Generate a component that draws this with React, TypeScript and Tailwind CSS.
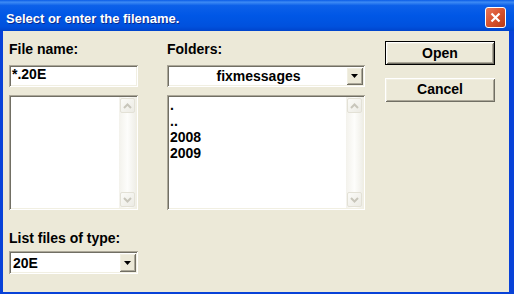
import { FC, ReactNode } from "react";

const sunken =
  "shadow-[inset_1px_1px_0_#aca899,inset_-1px_-1px_0_#ffffff,inset_2px_2px_0_#716f64,inset_-2px_-2px_0_#f1efe2]";
const raised =
  "shadow-[inset_1px_1px_0_#ffffff,inset_-1px_-1px_0_#716f64,inset_2px_2px_0_#f1efe2,inset_-2px_-2px_0_#aca899]";

const Label: FC<{ children: ReactNode }> = ({ children }) => (
  <div className="h-[16px] text-[14px] leading-[16px] font-bold text-black whitespace-nowrap">
    {children}
  </div>
);

const Chevron: FC<{ up?: boolean }> = ({ up }) => (
  <svg width="9" height="6" viewBox="0 0 9 6" className={up ? "" : "rotate-180"}>
    <path d="M1 5 L4.5 1.5 L8 5" fill="none" stroke="#c8c6bb" strokeWidth="2" />
  </svg>
);

const ScrollBtn: FC<{ up?: boolean }> = ({ up }) => (
  <div className="m-[1px] h-[15px] w-[15px] rounded-[2px] border border-[#e3e1d6] bg-gradient-to-br from-[#fbfbf8] to-[#ecebe4] flex items-center justify-center">
    <Chevron up={up} />
  </div>
);

const ScrollBar: FC = () => (
  <div className="w-[17px] h-full flex flex-col justify-between bg-gradient-to-r from-[#f3f2ec] via-[#fdfdfb] to-[#efeee7]">
    <ScrollBtn up />
    <ScrollBtn />
  </div>
);

const ListBox: FC<{ items?: string[] }> = ({ items = [] }) => (
  <div className={`h-[115px] bg-white p-[2px] flex ${sunken}`}>
    <div className="flex-1 pl-[1px] text-[14px] leading-[16px] font-bold text-black">
      {items.map((it) => (
        <div key={it} className="h-[16px]">
          {it}
        </div>
      ))}
    </div>
    <ScrollBar />
  </div>
);

const DropButton: FC = () => (
  <div className={`w-[17px] h-full bg-[#ece9d8] flex items-center justify-center ${raised}`}>
    <svg width="7" height="4" viewBox="0 0 7 4">
      <path d="M0 0 H7 L3.5 4 Z" fill="#000" />
    </svg>
  </div>
);

const Combo: FC<{ value: string; centered?: boolean; height: string }> = ({
  value,
  centered,
  height,
}) => (
  <div className={`${height} bg-white p-[2px] flex ${sunken}`}>
    <div
      className={`flex-1 flex items-center text-[14px] leading-[16px] font-bold text-black pl-[2px] ${centered ? "justify-center" : ""}`}
    >
      {value}
    </div>
    <DropButton />
  </div>
);

const Button: FC<{ children: ReactNode; isDefault?: boolean }> = ({
  children,
  isDefault,
}) => (
  <button
    className={`h-[24px] w-full bg-[#ece9d8] text-[14px] font-bold text-black ${isDefault ? "border border-black" : ""}`}
  >
    <div className={`h-full w-full flex items-center justify-center ${raised}`}>
      {children}
    </div>
  </button>
);

export default function App() {
  return (
    <div className="w-[514px] h-[294px] overflow-hidden bg-[#0842d8] flex flex-col font-['Liberation_Sans',Arial,sans-serif]">
      <div className="h-[31px] shrink-0 flex items-start justify-between pl-[6px] pr-[8px] bg-[linear-gradient(to_bottom,#0a5be6_0%,#3d8bf5_7%,#0c60e9_18%,#0057e6_50%,#0051dd_85%,#0044cc_100%)]">
        <div className="mt-[11px] text-[13px] leading-[16px] font-bold text-white [text-shadow:1px_1px_0_#0b2a8c]">
          Select or enter the filename.
        </div>
        <div className="mt-[7px] h-[21px] w-[21px] rounded-[3px] border border-white bg-gradient-to-br from-[#e8785a] via-[#d8522d] to-[#b83a14] flex items-center justify-center">
          <svg width="11" height="11" viewBox="0 0 11 11">
            <path d="M1.5 1.5 L9.5 9.5 M9.5 1.5 L1.5 9.5" stroke="#fff" strokeWidth="2.2" />
          </svg>
        </div>
      </div>
      <div className="flex-1 ml-[3px] mr-[5px] mb-[2px] bg-[#ece9d8] flex pl-[6px] pt-[10px]">
        <div className="w-[129px] flex flex-col">
          <Label>File name:</Label>
          <div className={`mt-[8px] h-[22px] bg-white p-[2px] ${sunken}`}>
            <div className="pl-[1px] text-[14px] leading-[14px] font-bold text-black">*.20E</div>
          </div>
          <div className="mt-[8px]">
            <ListBox />
          </div>
          <div className="mt-[20px]">
            <Label>List files of type:</Label>
          </div>
          <div className="mt-[5px]">
            <Combo value="20E" height="h-[23px]" />
          </div>
        </div>
        <div className="ml-[29px] w-[198px] flex flex-col">
          <Label>Folders:</Label>
          <div className="mt-[8px]">
            <Combo value="fixmessages" centered height="h-[22px]" />
          </div>
          <div className="mt-[8px]">
            <ListBox items={[".", "..", "2008", "2009"]} />
          </div>
        </div>
        <div className="ml-[20px] w-[110px] flex flex-col">
          <Button isDefault>Open</Button>
          <div className="mt-[12px]">
            <Button>Cancel</Button>
          </div>
        </div>
      </div>
    </div>
  );
}
